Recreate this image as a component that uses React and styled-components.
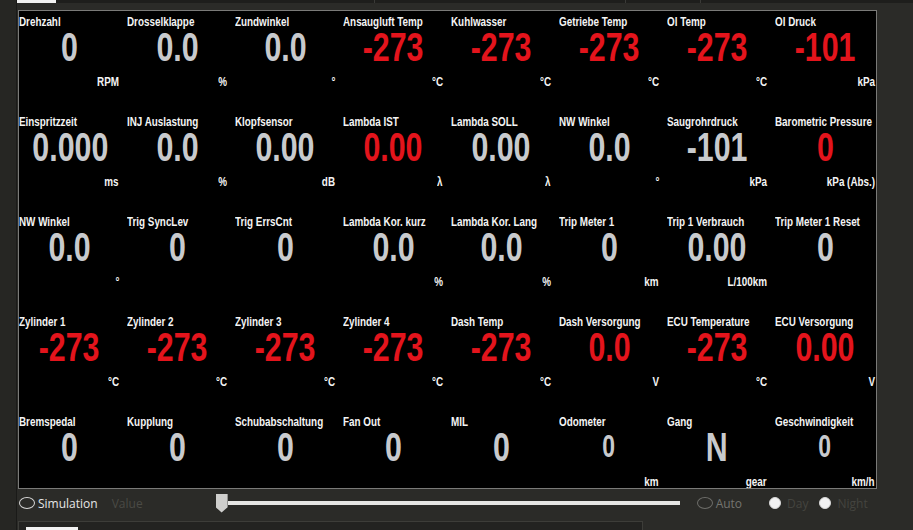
import React from "react";
import styled, { createGlobalStyle } from "styled-components";

const GlobalStyle = createGlobalStyle`
  html, body {
    margin: 0;
    padding: 0;
    background: #2b2b28;
    overflow: hidden;
  }
`;

// grundlayout
const Page = styled.div`
  width: 913px;
  height: 530px;
  display: flex;
  background: #2b2b28;
  overflow: hidden;
`;

const LeftRail = styled.div`
  width: 16px;
  flex: none;
  background: #262623;
  border-right: 1px solid #1a1a18;
`;

const Content = styled.div`
  flex: 1;
  display: flex;
  flex-direction: column;
  min-width: 0;
`;

const TopStrip = styled.div`
  height: 10px;
  flex: none;
`;

const TabBar = styled.div`
  height: 3px;
  display: flex;
  background: #1e1e1c;
`;

const TopTab = styled.div`
  width: ${(p) => p.$w}px;
  flex: none;
  background: ${(p) => (p.$active ? "#f2f2f2" : "transparent")};
  border-right: 1px solid ${(p) => (p.$active ? "#f2f2f2" : "#3a3a37")};
`;

const Middle = styled.div`
  display: flex;
  padding-left: 1px;
  flex: none;
`;

// anzeige
const Panel = styled.div`
  width: 859px;
  height: 479px;
  box-sizing: border-box;
  background: #000;
  border: 1px solid #7a7a78;
  display: grid;
  grid-template-columns: repeat(8, 100px);
  grid-auto-rows: 100px;
  column-gap: 8px;
  overflow: hidden;
  font-family: "Liberation Sans", Arial, sans-serif;
  font-weight: bold;
`;

const Cell = styled.div`
  display: flex;
  flex-direction: column;
  min-width: 0;
`;

const Narrow = styled.span`
  display: inline-block;
  transform: scaleX(${(p) => p.$sx || 0.73});
  transform-origin: ${(p) => p.$origin || "left"} center;
`;

const Label = styled.div`
  margin-top: 3px;
  height: 16px;
  line-height: 16px;
  font-size: 13.5px;
  color: #f4f4f4;
  white-space: nowrap;
`;

const Value = styled.div`
  height: 34px;
  line-height: 34px;
  text-align: center;
  font-size: ${(p) => (p.$small ? 31 : 41)}px;
  color: ${(p) => (p.$red ? "#e3141c" : "#c8cacd")};
  white-space: nowrap;
`;

const Unit = styled.div`
  margin-top: 11px;
  height: 14px;
  line-height: 14px;
  font-size: 13.5px;
  text-align: right;
  color: #f4f4f4;
  white-space: nowrap;
`;

// steuerleiste
const ControlBar = styled.div`
  height: 32px;
  flex: none;
  box-sizing: border-box;
  padding: 0 0 4px 2px;
  display: flex;
  align-items: center;
  font-family: "Open Sans", "Noto Sans", sans-serif;
  font-size: 12px;
`;

const Radio = styled.span`
  width: ${(p) => (p.$filled ? 12 : 16)}px;
  height: 12px;
  flex: none;
  box-sizing: border-box;
  border-radius: 50%;
  border: 1px solid ${(p) => (p.$dim ? "#6e6e6a" : "#d8d8d8")};
  background: ${(p) => (p.$filled ? "#f2f2f2" : "transparent")};
`;

const RadioText = styled.span`
  margin-left: ${(p) => (p.$filled ? 6 : 3)}px;
  color: ${(p) => p.$color};
  white-space: nowrap;
`;

const Option = styled.div`
  display: flex;
  align-items: center;
  margin-left: ${(p) => p.$ml || 0}px;
`;

const ValueText = styled.span`
  margin-left: 14px;
  color: #4a4a45;
`;

const Slider = styled.div`
  margin-left: 73px;
  width: 464px;
  height: 20px;
  display: flex;
  align-items: center;
`;

const Thumb = styled.div`
  width: 12px;
  height: 19px;
  flex: none;
  background: #cfcfcd;
  clip-path: polygon(0 0, 100% 0, 100% 72%, 50% 100%, 0 72%);
`;

const Track = styled.div`
  flex: 1;
  height: 4px;
  background: #e6e6e4;
`;

const BottomDock = styled.div`
  margin-left: 1px;
  width: 625px;
  height: 9px;
  box-sizing: border-box;
  border: 1px solid #3d3d39;
  border-bottom: none;
  background: #232321;
  display: flex;
  align-items: flex-end;
  padding-left: 7px;
`;

const DockTab = styled.div`
  width: 52px;
  height: 3px;
  background: #f2f2f2;
`;

const rows = [
  [
    ["Drehzahl", "0", "RPM"],
    ["Drosselklappe", "0.0", "%"],
    ["Zundwinkel", "0.0", "°"],
    ["Ansaugluft Temp", "-273", "°C", true],
    ["Kuhlwasser", "-273", "°C", true],
    ["Getriebe Temp", "-273", "°C", true],
    ["Ol Temp", "-273", "°C", true],
    ["Ol Druck", "-101", "kPa", true],
  ],
  [
    ["Einspritzzeit", "0.000", "ms"],
    ["INJ Auslastung", "0.0", "%"],
    ["Klopfsensor", "0.00", "dB"],
    ["Lambda IST", "0.00", "λ", true],
    ["Lambda SOLL", "0.00", "λ"],
    ["NW Winkel", "0.0", "°"],
    ["Saugrohrdruck", "-101", "kPa"],
    ["Barometric Pressure", "0", "kPa (Abs.)", true],
  ],
  [
    ["NW Winkel", "0.0", "°"],
    ["Trig SyncLev", "0", ""],
    ["Trig ErrsCnt", "0", ""],
    ["Lambda Kor. kurz", "0.0", "%"],
    ["Lambda Kor. Lang", "0.0", "%"],
    ["Trip Meter 1", "0", "km"],
    ["Trip 1 Verbrauch", "0.00", "L/100km"],
    ["Trip Meter 1 Reset", "0", ""],
  ],
  [
    ["Zylinder 1", "-273", "°C", true],
    ["Zylinder 2", "-273", "°C", true],
    ["Zylinder 3", "-273", "°C", true],
    ["Zylinder 4", "-273", "°C", true],
    ["Dash Temp", "-273", "°C", true],
    ["Dash Versorgung", "0.0", "V", true],
    ["ECU Temperature", "-273", "°C", true],
    ["ECU Versorgung", "0.00", "V", true],
  ],
  [
    ["Bremspedal", "0", ""],
    ["Kupplung", "0", ""],
    ["Schubabschaltung", "0", ""],
    ["Fan Out", "0", ""],
    ["MIL", "0", ""],
    ["Odometer", "0", "km", false, true],
    ["Gang", "N", "gear"],
    ["Geschwindigkeit", "0", "km/h", false, true],
  ],
];

const topTabs = [
  [38, true],
  [318, false],
  [250, false],
  [74, false],
];

export default function App() {
  return (
    <>
      <GlobalStyle />
      <Page>
        <LeftRail />
        <Content>
          <TopStrip>
            <TabBar>
              {topTabs.map(([w, active], i) => (
                <TopTab key={i} $w={w} $active={active} />
              ))}
            </TabBar>
          </TopStrip>
          <Middle>
            <Panel>
              {rows.flat().map(([label, value, unit, red, small], i) => (
                <Cell key={i}>
                  <Label>
                    <Narrow>{label}</Narrow>
                  </Label>
                  <Value $red={red} $small={small}>
                    <Narrow $sx={0.74} $origin="center">{value}</Narrow>
                  </Value>
                  <Unit>
                    <Narrow $origin="right">{unit}</Narrow>
                  </Unit>
                </Cell>
              ))}
            </Panel>
          </Middle>
          <ControlBar>
            <Option>
              <Radio />
              <RadioText $color="#e6e6e6">Simulation</RadioText>
            </Option>
            <ValueText>Value</ValueText>
            <Slider>
              <Thumb />
              <Track />
            </Slider>
            <Option $ml={17}>
              <Radio $dim />
              <RadioText $color="#74746f">Auto</RadioText>
            </Option>
            <Option $ml={27}>
              <Radio $filled />
              <RadioText $filled $color="#44443f">Day</RadioText>
            </Option>
            <Option $ml={11}>
              <Radio $filled />
              <RadioText $filled $color="#44443f">Night</RadioText>
            </Option>
          </ControlBar>
          <BottomDock>
            <DockTab />
          </BottomDock>
        </Content>
      </Page>
    </>
  );
}
